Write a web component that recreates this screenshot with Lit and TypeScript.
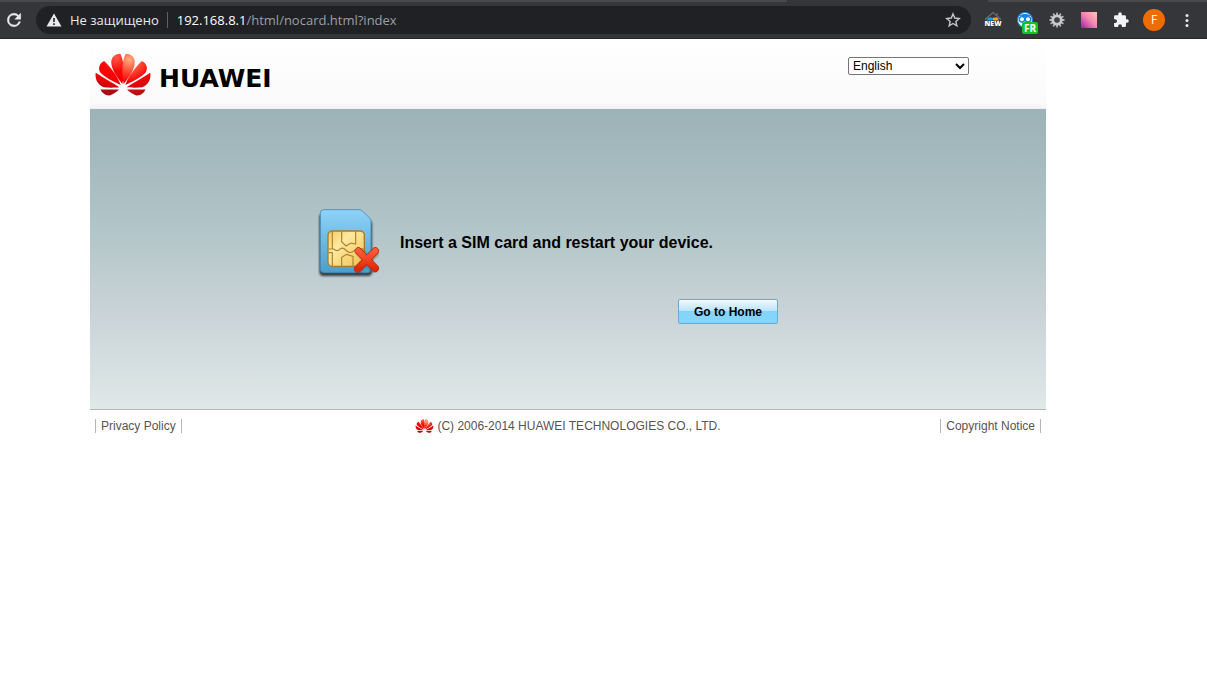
import { LitElement, html, svg, css } from "lit";
import { customElement } from "lit/decorators.js";

const petals = () => svg`
  <path d="M113 130C119 105 119 60 107 40C92 40 80 50 80 65C80 88 98 112 113 130Z"/>
  <path d="M108 133C99 108 79 81 59 62C45 68 40 84 47 95C59 109 84 121 108 133Z"/>
  <path d="M104 140C84 126 56 113 34 97C30 116 42 136 58 140C74 142 94 141 104 140Z"/>
  <path d="M103 147L48 147C54 160 66 167 77 164C88 160 98 152 103 147Z"/>`;

@customElement("huawei-flower")
export class HuaweiFlower extends LitElement {
  static styles = css`
    :host { display: block; flex: none; }
    svg { display: block; width: 100%; height: 100%; }
  `;
  render() {
    return html`<svg viewBox="32 38 166 128" aria-hidden="true">
      <defs>
        <radialGradient id="left" gradientUnits="userSpaceOnUse" cx="94" cy="50" r="105">
          <stop offset="0" stop-color="#ff5a4a"/><stop offset=".4" stop-color="#fa0606"/><stop offset=".75" stop-color="#ee0004"/><stop offset="1" stop-color="#a80c10"/>
        </radialGradient>
        <radialGradient id="right" gradientUnits="userSpaceOnUse" cx="96" cy="58" r="110">
          <stop offset="0" stop-color="#ffb080"/><stop offset=".3" stop-color="#ff5038"/><stop offset=".6" stop-color="#f40408"/><stop offset="1" stop-color="#b01014"/>
        </radialGradient>
      </defs>
      <g fill="url(#left)">${petals()}</g>
      <g fill="url(#right)" transform="translate(230 0) scale(-1 1)">${petals()}</g>
    </svg>`;
  }
}

@customElement("browser-bar")
export class BrowserBar extends LitElement {
  static styles = css`
    :host {
      display: block;
      background: #35363a;
      font-family: "Open Sans", "Noto Sans", sans-serif;
      font-size: 13px;
      color: #e8eaed;
    }
    .tabs { display: flex; justify-content: space-between; height: 2px; background: #35363a; }
    .tab-left { width: 787px; background: #4a4848; }
    .tab-right { width: 219px; background: #4a4848; }
    .bar {
      display: flex;
      align-items: center;
      height: 36px;
      padding: 0 10px 0 4px;
      border-bottom: 1px solid #262527;
    }
    button {
      display: block;
      flex: none;
      padding: 0;
      border: 0;
      background: none;
      color: inherit;
      font: inherit;
    }
    svg { display: block; }
    .address {
      display: flex;
      align-items: center;
      flex: 1;
      height: 28px;
      margin: 0 12px;
      padding: 0 10px;
      border-radius: 14px;
      background: #202124;
      white-space: nowrap;
    }
    .security { display: flex; align-items: center; gap: 8px; }
    .divider { width: 1px; height: 16px; margin: 0 9px 0 8px; background: #5f6368; }
    .url { flex: 1; color: #9aa0a6; }
    .host { color: #fff; }
    .tools { display: flex; align-items: center; gap: 12px; }
    .tool { position: relative; width: 20px; height: 20px; }
    .badge {
      position: absolute;
      left: 7px;
      top: 12px;
      width: 16px;
      height: 12px;
      border-radius: 2px;
      background: #10c422;
      color: #fff;
      font-size: 10px;
      font-weight: 700;
      line-height: 12px;
      text-align: center;
    }
    .new {
      position: absolute;
      left: 0;
      top: 10px;
      width: 20px;
      font-size: 7px;
      font-weight: 800;
      line-height: 8px;
      text-align: center;
      color: #fff;
    }
    .square { display: block; width: 16px; height: 16px; margin: 2px; background: linear-gradient(45deg, #9c1fa8, #f283ae 50%, #ffc8b4); }
    .avatar { width: 22px; height: 22px; border-radius: 11px; background: #ef6c00; color: #fff; font-size: 12px; line-height: 22px; text-align: center; }
  `;
  render() {
    const teeth = [0, 30, 60, 90, 120, 150, 180, 210, 240, 270, 300, 330];
    return html`
      <div class="tabs"><span class="tab-left"></span><span class="tab-right"></span></div>
      <div class="bar">
        <button aria-label="Reload">
          <svg width="20" height="20" viewBox="0 0 24 24" fill="#e8eaed"><path d="M17.65 6.35A7.96 7.96 0 0 0 12 4a8 8 0 1 0 7.73 10h-2.08A6 6 0 1 1 12 6c1.66 0 3.14.69 4.22 1.78L13 11h7V4z" stroke="#e8eaed" stroke-width=".6"/></svg>
        </button>
        <div class="address">
          <span class="security">
            <svg width="16" height="14" viewBox="0 0 16 14"><path d="M8 .5L15.5 13.5H.5Z" fill="#e8eaed"/><path d="M8 5v4M8 10.3v1.700" stroke="#202124" stroke-width="1.600"/></svg>
            <span>Не защищено</span>
          </span>
          <span class="divider"></span>
          <span class="url"><span class="host">192.168.8.1</span>/html/nocard.html?index</span>
          <button aria-label="Bookmark">
            <svg width="16" height="16" viewBox="0 0 16 16" fill="none" stroke="#c4c7ca" stroke-width="1.400"><path d="M8 1.9l1.75 4.15 4.5.4-3.4 2.95 1 4.4L8 11.45 4.15 13.8l1-4.4-3.4-2.95 4.5-.4z"/></svg>
          </button>
        </div>
        <div class="tools">
          <button class="tool" aria-label="What's new">
            <svg width="20" height="20" viewBox="0 0 20 20"><path d="M2 9.5L10 2.5l8 7M4.500 8.500V12M15.500 8.500V12M14 3v3" fill="none" stroke="#6b6c70" stroke-width="1.200"/><rect x="5" y="7.500" width="5" height="3" rx="1" fill="#1da1e6"/><rect x="10" y="7.500" width="5" height="3" rx="1" fill="#f5a81c"/></svg>
            <span class="new">NEW</span>
          </button>
          <button class="tool" aria-label="Translate">
            <svg width="20" height="20" viewBox="0 0 20 20"><circle cx="10" cy="10" r="7.500" fill="#fff" stroke="#1683d8" stroke-width="1.200"/><path d="M4.500 5.800C7 3.500 13 3.500 15.500 5.800L13 7H7Z" fill="#1683d8"/><g fill="#fff" stroke="#1683d8" stroke-width="1.400"><circle cx="7" cy="9.300" r="2.700"/><circle cx="13" cy="9.300" r="2.700"/></g></svg>
            <span class="badge">FR</span>
          </button>
          <button class="tool" aria-label="Settings">
            <svg width="20" height="20" viewBox="0 0 20 20"><g fill="#b4b4b4">${teeth.map((a) => svg`<rect x="9.100" y="2.500" width="1.800" height="4" rx=".5" transform="rotate(${a} 10 10)"/>`)}</g><circle cx="10" cy="10" r="4.200" fill="none" stroke="#c8c8c8" stroke-width="2.800"/><circle cx="10" cy="10" r="2.300" fill="#404145"/></svg>
          </button>
          <button class="tool" aria-label="Colors"><span class="square"></span></button>
          <button class="tool" aria-label="Extensions">
            <svg width="20" height="20" viewBox="0 0 24 24" fill="#f1f3f4"><path d="M20.500 11H19V7a2 2 0 0 0-2-2h-4V3.500a2.500 2.500 0 0 0-5 0V5H4a2 2 0 0 0-2 2v3.800h1.500a2.700 2.700 0 0 1 0 5.400H2V20c0 1.100.9 2 2 2h3.800v-1.500a2.700 2.700 0 0 1 5.400 0V22H17a2 2 0 0 0 2-2v-4h1.500a2.500 2.500 0 0 0 0-5z" transform="translate(2 2) scale(.84)"/></svg>
          </button>
          <button class="avatar" aria-label="Profile">F</button>
          <button class="tool" aria-label="Menu">
            <svg width="20" height="20" viewBox="0 0 20 20" fill="#e8eaed"><circle cx="10" cy="5.500" r="1.500"/><circle cx="10" cy="10.500" r="1.500"/><circle cx="10" cy="15.500" r="1.500"/></svg>
          </button>
        </div>
      </div>`;
  }
}

@customElement("app-root")
export class AppRoot extends LitElement {
  static styles = css`
    :host {
      display: block;
      min-height: 100vh;
      background: #fff;
      color: #000;
      font-family: "Liberation Sans", Arial, sans-serif;
      font-size: 12px;
    }
    .page { max-width: 956px; margin: 0 90px; }
    header {
      display: flex;
      justify-content: space-between;
      align-items: flex-start;
      height: 70px;
      padding: 14px 77px 0 5px;
      box-sizing: border-box;
      background: linear-gradient(#fff, #fafafa 92%, #f0f0f0);
    }
    .brand { display: flex; align-items: center; gap: 8px; color: #000; text-decoration: none; }
    .flower { width: 56px; height: 43px; }
    .wordmark { font: 700 25px/28px "DejaVu Sans", sans-serif; padding-top: 8px; }
    select {
      width: 121px;
      height: 18px;
      margin-top: 4px;
      padding: 0;
      border: 1px solid #767676;
      border-radius: 2px;
      background: #fff;
      color: #000;
      font: 12px "Liberation Sans", Arial, sans-serif;
    }
    main {
      display: flex;
      justify-content: center;
      padding: 100px 0 85px;
      border-bottom: 1px solid #b2b7b8;
      background: linear-gradient(#9bb2b7, #b2c5c8 40%, #c6d1d5 64%, #e0e8e8);
    }
    .notice { width: 500px; }
    .message { display: flex; align-items: center; gap: 14px; }
    .sim { display: block; flex: none; width: 68px; height: 72px; }
    h1 { margin: 0; padding-bottom: 4px; font-size: 16px; line-height: 20px; font-weight: 700; }
    .actions { display: flex; justify-content: flex-end; padding: 18px 40px 0 0; }
    .home {
      width: 100px;
      height: 25px;
      padding: 0;
      border: 1px solid #6aa9d6;
      border-radius: 2px;
      background: linear-gradient(#f0f9fe, #b6e2fb 50%, #84d3fb 50%, #84d6fb);
      color: #000;
      font: 700 12px "Liberation Sans", Arial, sans-serif;
    }
    footer {
      display: grid;
      grid-template-columns: 1fr auto 1fr;
      align-items: center;
      padding: 9px 5px 0;
      line-height: 14px;
      color: #555;
    }
    .link { justify-self: start; padding: 0 5px; border: solid #b5b5b5; border-width: 0 1px; color: #555; text-decoration: none; }
    .link:last-child { justify-self: end; }
    .copyright { display: flex; align-items: center; gap: 3px; }
    .mini { width: 19px; height: 14px; }
  `;
  render() {
    return html`
      <browser-bar></browser-bar>
      <div class="page">
        <header>
          <a class="brand" href="#"><huawei-flower class="flower"></huawei-flower><span class="wordmark">HUAWEI</span></a>
          <select aria-label="Language"><option>English</option></select>
        </header>
        <main>
          <div class="notice">
            <div class="message">
              <svg class="sim" viewBox="24 27 204 216" aria-hidden="true">
                <defs>
                  <linearGradient id="body" x1="0" y1="0" x2="0" y2="1"><stop offset="0" stop-color="#8fd3f8"/><stop offset="1" stop-color="#4a9fca"/></linearGradient>
                  <linearGradient id="gold" x1="0" y1="0" x2="1" y2="1"><stop offset="0" stop-color="#f4c65a"/><stop offset=".35" stop-color="#fde9a2"/><stop offset="1" stop-color="#f1c04c"/></linearGradient>
                  <linearGradient id="cross" x1="0" y1="0" x2="0" y2="1"><stop offset="0" stop-color="#ff5a36"/><stop offset="1" stop-color="#e02808"/></linearGradient>
                  <filter id="soft" x="-20%" y="-20%" width="140%" height="140%"><feGaussianBlur stdDeviation="3"/></filter>
                </defs>
                <path d="M41 36H150L186 68V215Q186 228 174 228H41Q28 228 28 215V47Z" fill="#1c282e" opacity=".85" filter="url(#soft)"/>
                <path d="M41 29H149Q153 29 156 32L180 55Q183 58 183 62V206Q183 218 171 218H43Q31 218 31 206V40Q31 29 41 29Z" fill="url(#body)" stroke="#4488b8" stroke-width="2.500"/>
                <rect x="54" y="93" width="109" height="106" rx="13" fill="url(#gold)" stroke="#a77b2b" stroke-width="4"/>
                <path d="M95 94V125L108 138L123 129L137 132V94M55 147H71Q82 157 90 147Q99 141 107 150Q121 164 132 152L144 147H162M55 158H67V198M95 198V172L110 163L129 169V198M67 94V147" fill="none" stroke="#ad812f" stroke-width="3.500"/>
                <path d="M149 155L192 207M196 158L144 208" stroke="#302000" stroke-width="22" stroke-linecap="round" opacity=".4" filter="url(#soft)"/>
                <path d="M145 153L196 205M196 153L143 207" stroke="#b9270d" stroke-width="22"  stroke-linecap="round"/>
                <path d="M145 153L196 205M196 153L143 207" stroke="url(#cross)" stroke-width="18" stroke-linecap="round"/>
              </svg>
              <h1>Insert a SIM card and restart your device.</h1>
            </div>
            <div class="actions"><button class="home">Go to Home</button></div>
          </div>
        </main>
        <footer>
          <a class="link" href="#">Privacy Policy</a>
          <span class="copyright"><huawei-flower class="mini"></huawei-flower>(C) 2006-2014 HUAWEI TECHNOLOGIES CO., LTD.</span>
          <a class="link" href="#">Copyright Notice</a>
        </footer>
      </div>`;
  }
}
